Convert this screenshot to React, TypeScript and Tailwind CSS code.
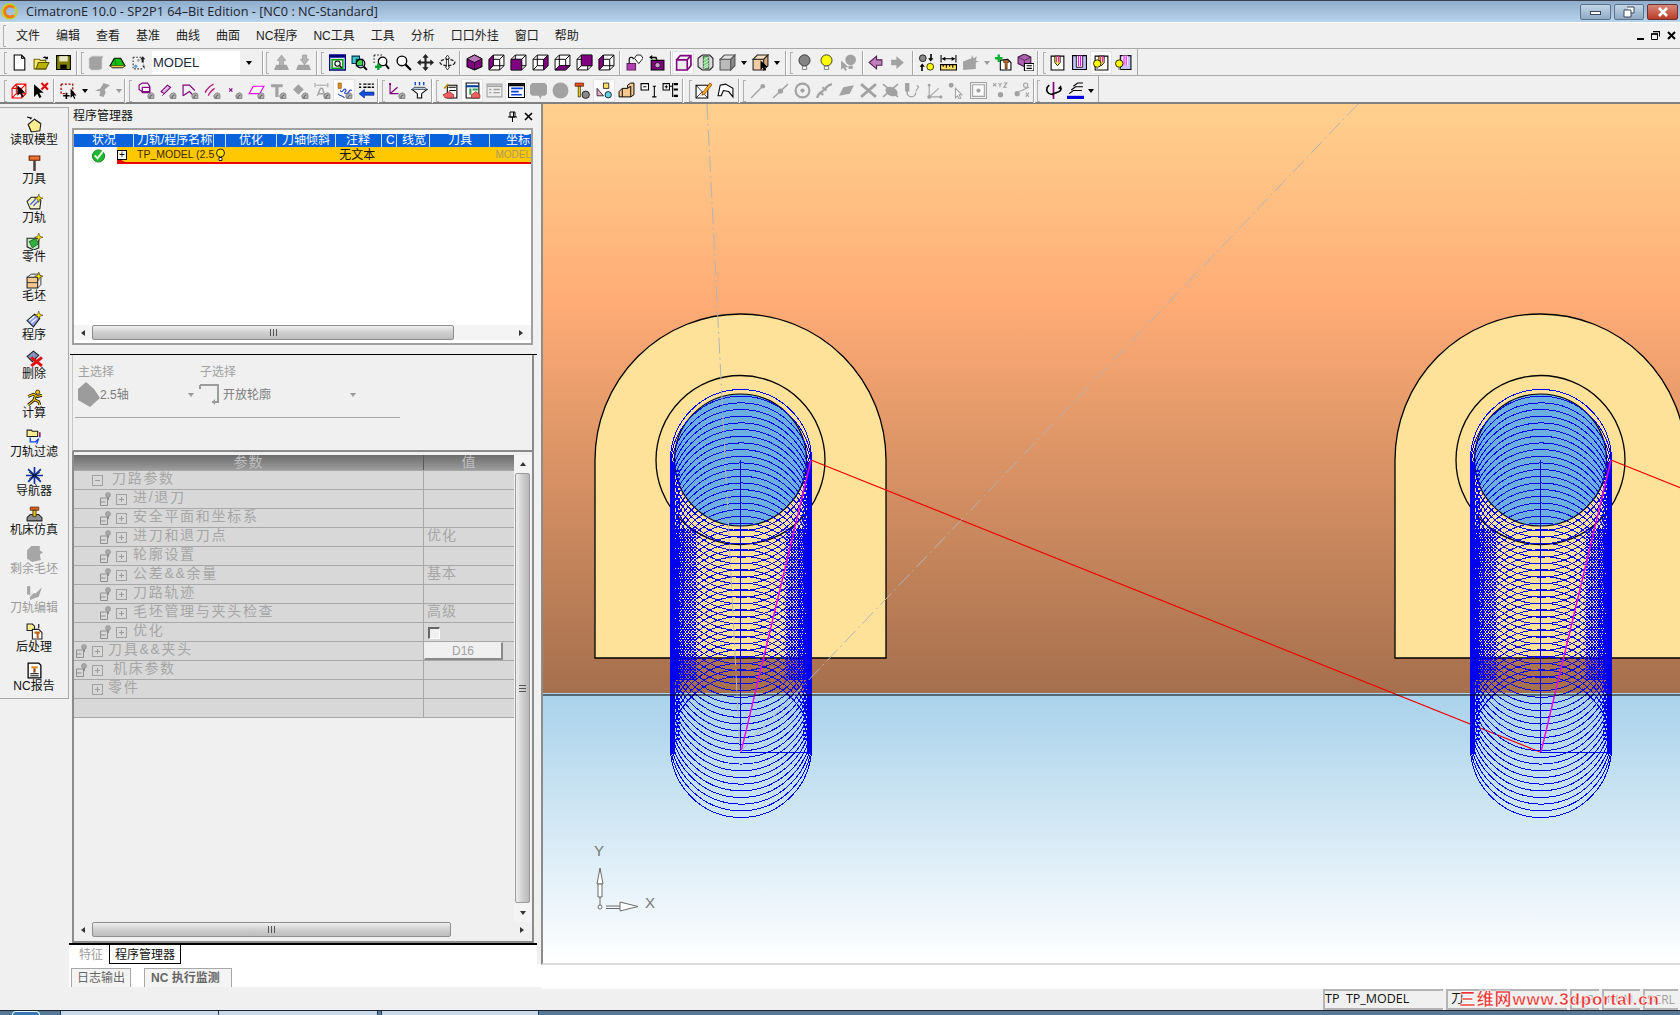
import type { ReactNode } from "react";

const P = "#800080";
const G = "#a2a2a2";

function S({ children, size = 17 }: { children: ReactNode; size?: number }) {
  return (
    <svg width={size} height={size} viewBox="0 0 16 16" className="shrink-0">
      {children}
    </svg>
  );
}

const badge = (
  <>
    <path d="M10 15.5a3.2 3.2 0 0 1 5-4v4z" fill="#b0b0b0" stroke="#666" strokeWidth=".6" />
    <path d="M11.5 15.5a2 2 0 0 1 2-3" fill="none" stroke="#333" strokeWidth=".7" />
  </>
);

const arrowCursor = <path d="M8 6l0 9 2.4-2.2 1.6 3 1.4-.8-1.6-2.8 3 0z" fill="#000" />;

function wire(face: string) {
  const faces: Record<string, string> = {
    front: "1,5 11,5 11,15 1,15",
    right: "11,5 15,1 15,11 11,15",
    back: "5,1 15,1 15,11 5,11",
    left: "1,5 5,1 5,11 1,15",
    bottom: "1,15 5,11 15,11 11,15",
  };
  return (
    <>
      <path d="M1 5h10v10H1zM1 5l4-4h10v10l-4 4M11 5l4-4M5 1v10h10M5 11l-4 4" fill="#fff" stroke="#000" strokeWidth=".9" />
      <polygon points={faces[face]} fill={P} stroke="#000" strokeWidth=".6" />
    </>
  );
}

function bulb(fill: string, base = "#777") {
  return (
    <>
      <circle cx="8" cy="6" r="5.2" fill={fill} stroke="#333" strokeWidth=".9" />
      <path d="M6 11.5h4v3H6z" fill="#fff" stroke={base} strokeWidth=".9" />
    </>
  );
}

function toolBlock(bg: string) {
  return (
    <>
      <path d="M2 2h12v13H2z" fill={bg} stroke="#000" />
      <path d="M5.500 2h5v6l-2.500 3-2.500-3z" fill="#ffff40" stroke="#000" strokeWidth=".8" />
      <path d="M7 2v6M9 2v6" stroke="#f0f" strokeWidth=".9" />
    </>
  );
}

const icons: Record<string, ReactNode> = {
  new: <path d="M3 1h7l3 3v11H3zM10 1v3h3" fill="#fff" stroke="#000" />,
  open: (
    <>
      <path d="M1 5h5l1 1h5v8H1z" fill="#ffe96b" stroke="#6c6800" />
      <path d="M3 14l2-6h10l-3 6z" fill="#bcb000" stroke="#5a5500" />
      <path d="M9 4c1-2 3-2 4-1l1-1v3h-3l1-1c-1-.5-2 0-3 0z" fill="#000" />
    </>
  ),
  save: (
    <>
      <path d="M1.500 1.500h13v13h-13z" fill="#808000" stroke="#000" />
      <path d="M4 2h8v5H4z" fill="#e8e8c8" />
      <path d="M5 10h6v4H5z" fill="#000" />
    </>
  ),
  g1: <path d="M2 4l3-2h10l-1 3v9l-3 1H4l-2-2z" fill={G} stroke="#c6c6c6" strokeWidth=".6" />,
  green: (
    <>
      <path d="M1 11l4-7h6l4 7z" fill="#12c010" stroke="#000" />
      <path d="M5 4l2 7M3 11h12" stroke="#0a6a08" strokeWidth=".8" />
      <path d="M1 11l2 2h10l2-2" fill="#e9cf52" stroke="#000" strokeWidth=".8" />
    </>
  ),
  dotted: (
    <>
      <path d="M2 3h8M2 3v11h9" fill="none" stroke="#333" strokeDasharray="1.500 1.500" />
      <path d="M11 2l2.500 3H12v3h-2V5H8.500zM13 14l-2.500-3H12V8" fill="#222" />
      <circle cx="4.500" cy="11.500" r="1.500" fill="#59c" />
      <circle cx="7" cy="6" r="1.200" fill="#999" />
    </>
  ),
  up: (
    <>
      <path d="M1 15l2-5h10l2 5z" fill={G} />
      <path d="M8 1l4 5h-2v5H6V6H4z" fill="#b4b4b4" stroke="#8c8c8c" strokeWidth=".5" />
    </>
  ),
  down: (
    <>
      <path d="M1 15l2-5h10l2 5z" fill={G} />
      <path d="M9 10L5 5h2V1h4v4h2z" fill="#b4b4b4" stroke="#8c8c8c" strokeWidth=".5" />
    </>
  ),
  fit: (
    <>
      <path d="M.5 1h15v14H.5z" fill="#d8e8e8" stroke="#000080" strokeWidth="1.400" />
      <path d="M1 1h14v2.500H1z" fill="#000080" />
      <path d="M3 5.500h10v8H3z" fill="#fff" stroke="#00a000" strokeWidth="1.400" />
      <circle cx="8" cy="9" r="2.500" fill="none" stroke="#000" />
      <path d="M10 11l2 2" stroke="#000" strokeWidth="1.400" />
    </>
  ),
  zoomA: (
    <>
      <path d="M1 2h7v7H1z" fill="#40c8c8" stroke="#003050" />
      <path d="M5 5h6v6H5z" fill="#40d040" stroke="#003050" />
      <circle cx="9" cy="9" r="4" fill="none" stroke="#000" strokeWidth="1.200" />
      <path d="M12 12l3 3" stroke="#000" strokeWidth="1.800" />
    </>
  ),
  zoomB: (
    <>
      <path d="M1 1h8M1 1v8" stroke="#222" strokeDasharray="1.500 1.500" />
      <circle cx="9" cy="7" r="4" fill="#fff" stroke="#000" strokeWidth="1.200" />
      <path d="M12 10l3 4" stroke="#000" strokeWidth="1.800" />
      <path d="M2 12h6M5 9v6" stroke="#00a030" strokeWidth="2.200" />
    </>
  ),
  mag: (
    <>
      <circle cx="6.500" cy="6.500" r="4.500" fill="#fff" stroke="#000" strokeWidth="1.300" />
      <path d="M10 10l5 5" stroke="#000" strokeWidth="2" />
    </>
  ),
  pan: <path d="M8 0l3 3.500H9V7h3.500V5L16 8l-3.500 3V9H9v3.500h2L8 16l-3-3.500h2V9H3.500v2L0 8l3.500-3v2H7V3.500H5z" fill="#222" />,
  orbit: (
    <>
      <path d="M8 1l2 3H9v8h1l-2 3-2-3h1V4H6z" fill="#fff" stroke="#222" strokeWidth=".8" />
      <ellipse cx="8" cy="8" rx="7" ry="3" fill="none" stroke="#222" strokeWidth="1.200" strokeDasharray="3 1.500" />
    </>
  ),
  solid: (
    <>
      <path d="M8 1l7 3.500v7.500L8 15l-7-3V4.500z" fill={P} stroke="#000" />
      <path d="M1 4.500L8 8l7-3.500L8 1z" fill="#b877b8" stroke="#000" strokeWidth=".7" />
      <path d="M8 8v7" stroke="#000" strokeWidth=".7" />
    </>
  ),
  w1: wire("left"),
  w2: wire("front"),
  w3: wire("right"),
  w4: wire("bottom"),
  w5: wire("back"),
  w6: wire("left"),
  lock: (
    <>
      <path d="M1 9h8v6H1z" fill="#b040b0" stroke="#602060" />
      <path d="M3 9V5a2 2 0 0 1 4 0" fill="none" stroke="#000" />
      <path d="M10 1h4l2 3-4 5-4-5z" fill="#fff" stroke="#000" strokeWidth=".8" />
    </>
  ),
  cam: (
    <>
      <path d="M3 6h12v9H3z" fill={P} stroke="#000" />
      <circle cx="9" cy="10.500" r="2.500" fill="#d0a0d0" stroke="#000" strokeWidth=".7" />
      <path d="M1 3l3-2v1.500h4l1 3H7.500L7 4H4v1.500z" fill="#000" />
    </>
  ),
  box: <path d="M1.500 5.500h10v9.500h-10zM1.500 5.500L5 1.500h10v9.500L11.500 15M11.500 5.500L15 1.500" fill="#ececec" stroke={P} strokeWidth="1.500" />,
  hatch: (
    <>
      <path d="M1 4l4-3h7l3 3v8l-3 3H5l-4-3z" fill="#ddd" stroke="#222" />
      <path d="M6 2v12h5V2z" fill="#76d07a" stroke="#222" strokeWidth=".6" />
      <path d="M6 6l5-3M6 9l5-3M6 12l5-3M6 14l5-3" stroke="#fff" strokeWidth=".7" />
    </>
  ),
  gcube: (
    <>
      <path d="M1 5h10v10H1z" fill="#bbb" stroke="#555" />
      <path d="M1 5l4-4h10l-4 4z" fill="#e0e0e0" stroke="#555" />
      <path d="M11 5l4-4v10l-4 4z" fill="#888" stroke="#555" />
    </>
  ),
  tan: (
    <>
      <path d="M1 5h10v10H1z" fill="#f1ccA0" stroke="#222" />
      <path d="M1 5l4-4h10l-4 4z" fill="#f7e0c0" stroke="#222" />
      <path d="M11 5l4-4v10l-4 4z" fill="#d4a878" stroke="#222" />
      {arrowCursor}
    </>
  ),
  bulbG: bulb("#858585"),
  bulbY: bulb("#ffff00"),
  bulbC: (
    <>
      <circle cx="10" cy="5.500" r="5" fill={G} />
      <path d="M8 11h4v3H8z" fill={G} />
      <path d="M1 6v9l2-2 2 3 1.500-1-1.500-2.500h3z" fill={G} />
    </>
  ),
  back: <path d="M2 8l7-6v3.500h5v5H9V14z" fill="#c080c0" stroke="#502050" />,
  fwd: <path d="M14 8L7 2v3.500H2v5h5V14z" fill={G} />,
  swap: (
    <>
      <circle cx="4.500" cy="4" r="3.200" fill="#888" stroke="#000" strokeWidth=".7" />
      <circle cx="11.500" cy="12" r="3.200" fill="#ff0" stroke="#000" strokeWidth=".7" />
      <path d="M11.500 0v4h-2l2.500 3 2.500-3h-1.500V0zM4.500 16v-4h2L4 9l-2.500 3H3v4z" fill="#000" />
    </>
  ),
  measure: (
    <>
      <path d="M1 1v7M15 1v7M2 4.500h12" stroke="#000" />
      <path d="M2 4.500L5 2.500v4zM14 4.500L11 2.500v4z" fill="#000" />
      <path d="M.5 10h15v5H.5z" fill="#ffe060" stroke="#000" />
      <path d="M3 10v2M6 10v3M9 10v2M12 10v3" stroke="#000" />
    </>
  ),
  gstar: <path d="M1 7l8-3V1l2 3 3-2-1 4 3 1-3 1v6l-12 1z" fill={G} />,
  plusT: (
    <>
      <path d="M5 6l7-1 3 3v7H5z" fill="#fff" stroke="#000" />
      <path d="M8 6h5v2h-1.500v6h-2V8H8z" fill="#c06010" stroke="#000" strokeWidth=".4" />
      <path d="M0 4h7M3.500 .5v7" stroke="#00b030" strokeWidth="2.200" />
    </>
  ),
  cubeT: (
    <>
      <path d="M7 0l6 3v6l-6 3-6-3V3z" fill="#b060b0" stroke="#402040" />
      <path d="M7 15V6l-6-3M7 6l6-3" fill="none" stroke="#402040" strokeWidth=".7" />
      <path d="M7 9h9v7H7z" fill="#fff" stroke="#000" />
      <path d="M9 11h5M9 13.500h5" stroke="#000" />
    </>
  ),
  t1: toolBlock("#fff"),
  t2: (
    <>
      <path d="M1.500 1.500h13v13h-13z" fill="#c4c4ff" stroke="#000" />
      <path d="M5 1.500h6v11H5z" fill="#fff" stroke="#000" strokeWidth=".8" />
      <path d="M7 1.500v10M9 1.500v10" stroke="#f0f" />
    </>
  ),
  t3: (
    <>
      {toolBlock("#fff")}
      <circle cx="4" cy="9" r="3.500" fill="#ff0" stroke="#000" strokeWidth=".8" />
      <path d="M3 13h2v2H3z" fill="#999" />
    </>
  ),
  t4: (
    <>
      <path d="M5 1.500h10v13H5z" fill="#c4c4ff" stroke="#000" />
      <path d="M7 1.500h5v9H7z" fill="#fff" />
      <path d="M8.500 1.500v9M10.500 1.500v9" stroke="#f0f" />
      <circle cx="4" cy="9" r="3.500" fill="#ff0" stroke="#000" strokeWidth=".8" />
      <path d="M3 13h2v2H3z" fill="#999" />
    </>
  ),
  redCube: (
    <>
      <path d="M1 6h9v9H1zM1 6l4-4h9v9l-4 4M10 6l4-4M5 2v9h9M5 11l-4 4" fill="#fff" stroke="#f00" />
      <path d="M6 3v10l2.500-2.500 2 4 1.500-.8-2-3.700h3.500z" fill="#000" />
    </>
  ),
  cursorX: (
    <>
      <path d="M1 2v12l3-3 2 4 2-1-2-4h4z" fill="#000" />
      <path d="M8 1l6 6M14 1L8 7" stroke="#e00000" strokeWidth="2" />
    </>
  ),
  dashSel: (
    <>
      <path d="M1 2h11v8M1 2v9h6" fill="none" stroke="#a00000" strokeDasharray="2 1.500" strokeWidth="1.200" />
      <path d="M10 6v9l2-2 1.500 3 1-.6-1.500-2.800h2.500z" fill="#000" />
      <path d="M3 13h6M6 10v6" stroke="#000" strokeWidth="1.500" />
    </>
  ),
  gArrow: <path d="M1 8l5-2 3-5 6 2-5 4 1 3-2 4-4-1 1-4z" fill={G} />,
  tp1: (
    <>
      <path d="M1 3l3-2h5l2 3v5H4L1 7z" fill="#fff" stroke={P} strokeWidth="1.100" />
      <path d="M4 5h7v5H4z" fill="none" stroke={P} strokeWidth="1.100" />
      {badge}
    </>
  ),
  tp2: (
    <>
      <path d="M1 9l6-6 3 2-6 6z" fill="#e0c0e0" stroke={P} />
      <path d="M2 13l8-8" stroke={P} strokeWidth=".8" />
      {badge}
    </>
  ),
  tp3: (
    <>
      <path d="M1 13V3h6l5 5" fill="none" stroke={P} strokeWidth="1.100" />
      <path d="M1 13l6-4 3 3" fill="none" stroke={P} strokeWidth="1.100" />
      {badge}
    </>
  ),
  tp4: (
    <>
      <path d="M1 10c2-4 4-6 8-8M4 13c1-3 3-5 6-7" fill="none" stroke="#b02080" strokeWidth="1.200" />
      {badge}
    </>
  ),
  tp5: (
    <>
      <path d="M3 6l3 3M6 6L3 9" stroke={P} />
      {badge}
    </>
  ),
  tp6: (
    <>
      <path d="M1 11l4-7h10l-4 7z" fill="#fff" stroke="#f000f0" strokeWidth="1.100" />
      {badge}
    </>
  ),
  tp7: (
    <>
      <path d="M1 2h11v3H8v9H5V5H1z" fill={G} />
      {badge}
    </>
  ),
  tp8: (
    <>
      <path d="M1 7l5-5 5 5-5 5z" fill={G} />
      {badge}
    </>
  ),
  tp9: (
    <>
      <path d="M1 1v4M13 1v4M2 3h10" stroke={G} />
      <path d="M3 13l3-7h2l2 7M4 11h5" fill="none" stroke={G} strokeWidth="1.300" />
      {badge}
    </>
  ),
  zig: (
    <>
      <path d="M2 1h3v5H2z" fill="#e09020" stroke="#805000" strokeWidth=".6" />
      <path d="M4 8c2 4 3-3 5-1s-3 3 0 4 3-5 6-3M2 11c2 3 4 1 6 4" fill="none" stroke="#2040c0" />
      {badge}
    </>
  ),
  lines: (
    <>
      <path d="M1 2h2M5 2h10M1 5h2M5 5h10" stroke="#000" strokeWidth="1.300" strokeDasharray="3 1" />
      <path d="M1 11l5-4v2.500h9v3H6V15z" fill="#1050e0" stroke="#002080" strokeWidth=".6" />
    </>
  ),
  axisP: (
    <>
      <path d="M1 1v10h8M1 11l7-6" fill="none" stroke={P} strokeWidth="1.100" />
      <circle cx="1" cy="2" r="1" fill={P} />
      {badge}
    </>
  ),
  funnel: (
    <>
      <path d="M1 7h14l-5 4v4H6v-4z" fill="#fff" stroke="#000" />
      <path d="M1 7l2-2h10l2 2" fill="#bcd" stroke="#000" strokeWidth=".6" />
      <path d="M4 0v3M8 0v3M12 0v3" stroke="#1040d0" strokeWidth="1.300" />
    </>
  ),
  hand: (
    <>
      <path d="M5 3h9v12H5z" fill="#fff" stroke="#000" />
      <path d="M6 5h7M7 8h6" stroke="#000" />
      <path d="M2 6l4-4" stroke="#c09000" strokeWidth="1.500" />
      <path d="M1 12l6-3 4 3v3H3z" fill="#f06060" stroke="#802020" strokeWidth=".6" />
    </>
  ),
  tableR: (
    <>
      <path d="M2 1h12v14H2z" fill="#fff" stroke="#000" />
      <path d="M2 4h12" stroke="#00409a" strokeWidth="2" />
      <path d="M5 6h2v6H5zM8 6h5v2H8z" fill="#30a050" />
      <path d="M7 12l4-3 4 3v3H7z" fill="#f06060" stroke="#802020" strokeWidth=".6" />
    </>
  ),
  tableG: (
    <>
      <path d="M1 2h14v12H1z" fill="#eee" stroke={G} />
      <path d="M1 4h14" stroke={G} strokeWidth="1.500" />
      <path d="M3 7h2M3 10h2M7 7h6M7 10h6" stroke={G} strokeWidth="1.400" />
    </>
  ),
  tableB: (
    <>
      <path d="M.5 1.500h15v13H.5z" fill="#fff" stroke="#000" />
      <path d="M1 2h14v2H1z" fill="#000" />
      <path d="M3 6h11M3 9h7M3 12h10" stroke="#0040e0" strokeWidth="1.600" />
    </>
  ),
  bubble: <path d="M2 1h12l2 2v8l-2 2h-3l-1 3-2-3H2l-2-2V3z" fill={G} />,
  disc: <circle cx="8" cy="8" r="7.500" fill={G} />,
  toolBall: (
    <>
      <path d="M1 1h8v3H1z" fill="#e85020" stroke="#501000" strokeWidth=".6" />
      <path d="M4 4h2v10H4z" fill="#ffe000" stroke="#000" strokeWidth=".6" />
      <circle cx="11" cy="12" r="3.500" fill="#888" stroke="#000" strokeWidth=".7" />
    </>
  ),
  shapes: (
    <>
      <path d="M1 13V6l6 7z" fill="#f0a8c8" stroke="#000" strokeWidth=".7" />
      <path d="M7 1h5v5H7z" fill="#ffe060" stroke="#000" strokeWidth=".7" />
      <circle cx="11.500" cy="12" r="3" fill="#60d0e0" stroke="#000" strokeWidth=".7" />
    </>
  ),
  block: <path d="M1 14V9l3-3h5V3l3-2h3v11l-3 2zM9 6l3-2v10M4 6v8" fill="#f6c890" stroke="#000" strokeWidth=".9" />,
  minusT: (
    <>
      <path d="M1 1.500h7v6H1z" fill="#fff" stroke="#000" />
      <path d="M3 4.500h3M12 4h3M13.500 4v10M11.500 14h4" stroke="#000" />
    </>
  ),
  plusTree: (
    <>
      <path d="M1 1.500h6v6H1z" fill="#fff" stroke="#000" />
      <path d="M2.500 4.500h3M4 3v3M7 4h3M10 1v13" stroke="#000" />
      <path d="M11 1h4v2h-4zM11 6h4v2h-4zM11 12h4v2h-4z" fill="#000" />
    </>
  ),
  note: (
    <>
      <path d="M1 3h11v12H1z" fill="#fff" stroke="#000" />
      <path d="M1 3l11 12M1 15l6-6" stroke="#000" strokeWidth=".7" />
      <path d="M7 10l7-9 2 1.500-7 9-2.500 1z" fill="#f0b020" stroke="#802000" strokeWidth=".6" />
    </>
  ),
  wireS: <path d="M1 13L3 3l5-1 7 4 0 8-4-5-5-1-2 5z" fill="#fff" stroke="#000" />,
  l1: (
    <>
      <path d="M1 15L11 5" stroke={G} strokeWidth="1.300" />
      <circle cx="12" cy="4" r="2.200" fill={G} />
    </>
  ),
  l2: (
    <>
      <path d="M1 15L15 2" stroke={G} strokeWidth="1.300" />
      <circle cx="8" cy="8.500" r="2.500" fill={G} />
    </>
  ),
  l3: (
    <>
      <circle cx="8" cy="8" r="6.500" fill="none" stroke={G} strokeWidth="2" />
      <circle cx="8" cy="8" r="2" fill={G} />
    </>
  ),
  l4: <path d="M1 15c1-5 4-5 6-7s3-5 8-6M3 10l4 2M6 5l4 3" fill="none" stroke={G} strokeWidth="2" />,
  l5: <path d="M1 13l4-8 10-2-4 8z" fill={G} />,
  l6: <path d="M1 2l14 12M15 2L1 14" stroke={G} strokeWidth="2.500" />,
  l7: (
    <>
      <path d="M1 2l14 12M15 2L1 14" stroke={G} strokeWidth="1.500" />
      <ellipse cx="9" cy="9" rx="6" ry="4" fill={G} transform="rotate(25 9 9)" />
    </>
  ),
  l8: (
    <>
      <path d="M3 2v8a4 4 0 0 0 8 0" fill="none" stroke={G} strokeWidth="1.300" />
      <path d="M1 1h4v8H1z" fill={G} />
      <path d="M11 9l3-5M12 3l2 2" stroke={G} />
    </>
  ),
  l9: (
    <>
      <path d="M3 14V2M3 14h12M3 14l9-8" stroke={G} />
      <circle cx="3" cy="14" r="1.800" fill={G} />
      <circle cx="14" cy="14" r="1.500" fill={G} />
      <circle cx="3" cy="3" r="1.300" fill={G} />
    </>
  ),
  l10: (
    <>
      <circle cx="3" cy="3" r="2.300" fill={G} />
      <path d="M7 6v9l2-2 1.500 3 1.500-.7L10.500 12H13z" fill="#fff" stroke={G} />
    </>
  ),
  l11: (
    <>
      <path d="M.5.500h15v15H.5z" fill="none" stroke={G} />
      <path d="M2.500 2.500h11v11h-11z" fill="#fafafa" stroke={G} />
      <circle cx="8" cy="8" r="2" fill={G} />
    </>
  ),
  l12: (
    <>
      <path d="M1 1l3 3M4 1L1 4M6 1l1.500 2L9 1M7.500 3v2M11 1h3l-3 4h3" stroke={G} fill="none" />
      <circle cx="8" cy="12" r="2.500" fill={G} />
    </>
  ),
  l13: (
    <>
      <circle cx="11" cy="3" r="2" fill="none" stroke={G} />
      <circle cx="3" cy="11" r="2.500" fill={G} />
      <path d="M5 9l9-4M11 10l3 4M14 10l-3 4" stroke={G} />
    </>
  ),
  spin: (
    <>
      <path d="M8 0v16" stroke={P} strokeWidth="1.600" />
      <path d="M8 13h-1" stroke={P} />
      <path d="M4 3C-1 7 3 13 8 11s7-2 7-5" fill="none" stroke="#000" strokeWidth="1.500" />
      <path d="M15 3l1 4-4-1z" fill="#000" />
    </>
  ),
  layers: (
    <>
      <path d="M2 11l4-3h8M4 7.500l4-3h7M6 4l4-3h5" fill="none" stroke="#000" />
      <path d="M0 13h16v3H0z" fill="#0000e0" />
    </>
  ),
};

function Btn({ name, hi, className = "" }: { name: string; hi?: boolean; className?: string }) {
  return (
    <div
      className={`flex h-[23px] w-[22px] shrink-0 items-center justify-center ${
        hi ? "border border-[#e4e4e4] bg-[#fbfbfb]" : ""
      } ${className}`}
    >
      <S>{icons[name]}</S>
    </div>
  );
}

function Btns({ names, hi = [], first = "" }: { names: string[]; hi?: string[]; first?: string }) {
  return (
    <>
      {names.map((n, i) => (
        <Btn key={n + i} name={n} hi={hi.includes(n)} className={i === 0 ? first : ""} />
      ))}
    </>
  );
}

function Drop({ className = "", gray }: { className?: string; gray?: boolean }) {
  return (
    <div className={`flex shrink-0 items-center justify-center ${className}`}>
      <span
        className={`h-0 w-0 border-x-[3.5px] border-t-[4px] border-x-transparent ${
          gray ? "border-t-[#9a9a9a]" : "border-t-black"
        }`}
      />
    </div>
  );
}

function Sep({ className = "" }: { className?: string }) {
  return <div className={`h-[24px] w-[2px] shrink-0 border-l border-r border-l-[#a6a6a6] border-r-white ${className}`} />;
}

function Grip({ className = "" }: { className?: string }) {
  return <div className={`h-[22px] w-[3px] shrink-0 border-y border-l border-[#b0b0b0] ${className}`} />;
}

function TitleBar() {
  return (
    <div className="flex h-[22px] shrink-0 items-center border-t border-[#3c4149] bg-[linear-gradient(180deg,#8fadcc,#b9d3ec)] pr-[2px]">
      <svg width="17" height="17" viewBox="0 0 16 16" className="ml-[1px] shrink-0">
        <circle cx="8" cy="8" r="6.500" fill="none" stroke="#c4d028" strokeWidth="2.500" />
        <path d="M12 4.500a5 5 0 1 0 0 7" fill="none" stroke="#f07818" strokeWidth="2.600" />
      </svg>
      <span className="ml-[8px] text-[12.7px] text-[#20242c] [font-family:'Open_Sans','Noto_Sans_CJK_SC',sans-serif]">
        CimatronE 10.0 - SP2P1 64–Bit Edition - [NC0 : NC-Standard]
      </span>
      <div className="ml-auto flex gap-[3px]">
        <div className="flex h-[16px] w-[31px] items-center justify-center rounded-[2px] border border-[#5d738c] bg-[linear-gradient(180deg,#c3d6e8,#8fa9c4)]">
          <span className="mt-[3px] h-[4px] w-[11px] border border-[#38465a] bg-white" />
        </div>
        <div className="flex h-[16px] w-[30px] items-center justify-center rounded-[2px] border border-[#5d738c] bg-[linear-gradient(180deg,#c3d6e8,#8fa9c4)]">
          <svg width="12" height="12" viewBox="0 0 12 12">
            <path d="M4 1h7v6H8M1 4h7v7H1z" fill="#fff" stroke="#38465a" />
          </svg>
        </div>
        <div className="flex h-[16px] w-[31px] items-center justify-center rounded-[2px] border border-[#6b3030] bg-[linear-gradient(180deg,#d88878,#b83c28)]">
          <svg width="12" height="10" viewBox="0 0 12 10">
            <path d="M2 1l8 8M10 1L2 9" stroke="#fff" strokeWidth="2.600" />
          </svg>
        </div>
      </div>
    </div>
  );
}

const menus = ["文件", "编辑", "查看", "基准", "曲线", "曲面", "NC程序", "NC工具", "工具", "分析", "口口外挂", "窗口", "帮助"];

function MenuBar() {
  return (
    <div className="flex h-[27px] shrink-0 items-center border-t border-b border-t-white border-b-[#a8a8a8] text-[12px] text-[#222]">
      <Grip className="ml-[3px] mr-[2px]" />
      {menus.map((m) => (
        <span key={m} className="px-[8px]">
          {m}
        </span>
      ))}
      <div className="ml-auto mr-[4px] flex items-center gap-[7px]">
        <span className="mt-[6px] h-[2px] w-[7px] bg-black" />
        <svg width="9" height="9" viewBox="0 0 9 9">
          <path d="M2.500.500h6v5M.500 3h6v5.500h-6z" fill="none" stroke="#000" />
          <path d="M2 .5h7M0 3h7" stroke="#000" strokeWidth="1.400" />
        </svg>
        <svg width="9" height="9" viewBox="0 0 9 9">
          <path d="M1 1l7 7M8 1L1 8" stroke="#000" strokeWidth="2" />
        </svg>
      </div>
    </div>
  );
}

function ToolRowOne() {
  return (
    <div className="flex h-[27px] shrink-0 border-b border-[#a8a8a8]">
      <div className="flex w-[1138px] items-center border-r border-[#a8a8a8] pt-[1px]">
        <Grip className="ml-[4px] mr-[1px]" />
        <Btns names={["new", "open", "save"]} />
        <Sep className="ml-[2px]" />
        <Grip className="ml-[3px]" />
        <Btns names={["g1", "green", "dotted"]} />
        <div className="ml-[2px] flex h-[23px] w-[105px] shrink-0 items-center justify-between bg-white pl-[1px] text-[13px] text-[#1a2a3a] [font-family:'Liberation_Sans',sans-serif]">
          MODEL
          <span className="flex h-full w-[17px] items-center justify-center bg-[#f0f0f0]">
            <span className="h-0 w-0 border-x-[3.5px] border-t-[4px] border-x-transparent border-t-black" />
          </span>
        </div>
        <Sep className="ml-[5px]" />
        <Grip className="ml-[2px] mr-[1px]" />
        <Btns names={["up", "down"]} />
        <Sep className="ml-[2px]" />
        <Grip className="ml-[3px] mr-[2px]" />
        <Btns names={["fit", "zoomA", "zoomB", "mag", "pan", "orbit"]} />
        <Sep className="ml-[1px]" />
        <Btns first="ml-[2px]" names={["solid", "w1", "w2", "w3", "w4", "w5", "w6"]} />
        <Sep className="ml-[2px]" />
        <Btns first="ml-[2px]" names={["lock", "cam"]} />
        <Sep className="ml-[3px]" />
        <Btns hi={["box"]} names={["box", "hatch", "gcube"]} />
        <Drop className="w-[11px]" />
        <Btn name="tan" />
        <Drop className="w-[12px]" />
        <Sep className="ml-[2px]" />
        <Grip className="ml-[3px]" />
        <Btns names={["bulbG", "bulbY", "bulbC"]} />
        <Sep className="ml-[3px]" />
        <Btns names={["back", "fwd"]} />
        <Sep className="ml-[4px]" />
        <Btns first="ml-[1px]" names={["swap", "measure", "gstar"]} />
        <Drop gray className="w-[11px]" />
        <Btns names={["plusT", "cubeT"]} />
        <Sep className="ml-[1px]" />
        <Grip className="ml-[4px]" />
        <Btns hi={["t3"]} names={["t1", "t2", "t3", "t4"]} />
      </div>
    </div>
  );
}

function ToolRowTwo() {
  return (
    <div className="flex h-[28px] shrink-0 border-b-2 border-[#808080]">
      <div className="flex w-[1099px] items-center border-r border-[#a8a8a8] pt-[3px]">
        <Grip className="ml-[4px] mr-[1px]" />
        <Btns names={["redCube", "cursorX"]} />
        <Sep className="ml-[1px]" />
        <Btn name="dashSel" className="ml-[2px]" />
        <Drop className="w-[12px]" />
        <Btn name="gArrow" />
        <Drop gray className="w-[11px]" />
        <Sep />
        <Grip className="ml-[3px] mr-[3px]" />
        <Btns hi={["zig"]} names={["tp1", "tp2", "tp3", "tp4", "tp5", "tp6", "tp7", "tp8", "tp9", "zig", "lines"]} />
        <Sep />
        <Grip className="ml-[3px] mr-[1px]" />
        <Btns names={["axisP", "funnel"]} />
        <Sep className="ml-[1px]" />
        <Grip className="ml-[3px]" />
        <Btns
          hi={["tableR", "tableB", "shapes"]}
          names={["hand", "tableR", "tableG", "tableB", "bubble", "disc", "toolBall", "shapes", "block", "minusT", "plusTree"]}
        />
        <Sep className="ml-[1px]" />
        <Grip className="ml-[5px]" />
        <Btns names={["note", "wireS"]} />
        <Sep className="ml-[2px]" />
        <Grip className="ml-[3px] mr-[1px]" />
        <Btns names={["l1", "l2", "l3", "l4", "l5", "l6", "l7", "l8", "l9", "l10", "l11", "l12", "l13"]} />
        <Sep />
        <Grip className="ml-[2px] mr-[2px]" />
        <Btns names={["spin", "layers"]} />
        <Drop className="w-[10px]" />
      </div>
    </div>
  );
}

const sideIcons: Record<string, ReactNode> = {
  read: (
    <>
      <path d="M2 8l6-5 6 4-1 7-8 1z" fill="#ffee90" stroke="#222" />
      <path d="M2 8l3 7M8 3l5 4" stroke="#222" strokeWidth=".7" />
      <path d="M1 1l4 1-1 1" fill="none" stroke="#000" />
    </>
  ),
  tool: (
    <>
      <path d="M3 1h10v4H3z" fill="#f07030" stroke="#602000" />
      <path d="M6.800 5h2.400v10H6.800z" fill="#504040" />
    </>
  ),
  path: (
    <>
      <path d="M1 7l4-4h6l3 3-1 8H4z" fill="#f4f0c0" stroke="#222" />
      <path d="M4 10l5-5M7 11l5-5" stroke="#4060d0" strokeWidth="1.300" />
      <path d="M12 0l1 3 3 1-3 1-1 3-1-3-3-1 3-1z" fill="#ffe000" stroke="#000" strokeWidth=".4" />
    </>
  ),
  part: (
    <>
      <path d="M1 5h11v9l-5 2-6-3z" fill="#c8e8c8" stroke="#222" />
      <path d="M3 8l6-3 3 5-6 4z" fill="#30b040" stroke="#0a4010" strokeWidth=".6" />
      <path d="M12 0l1 3 3 1-3 1-1 3-1-3-3-1 3-1z" fill="#ffe000" stroke="#000" strokeWidth=".4" />
    </>
  ),
  stock: (
    <>
      <path d="M1 5h10v10H1z" fill="#f6c890" stroke="#222" />
      <path d="M1 5l4-3h8l-2 3M11 5l3-2v9l-3 3M11 10H1" fill="none" stroke="#222" strokeWidth=".8" />
      <path d="M12 0l1 3 3 1-3 1-1 3-1-3-3-1 3-1z" fill="#ffe000" stroke="#000" strokeWidth=".4" />
    </>
  ),
  prog: (
    <>
      <path d="M1 9l7-6 5 4-6 8z" fill="#8aa0f0" stroke="#222" />
      <path d="M3 9l5-4M5 11l5-4" stroke="#fff" strokeWidth="1.100" />
      <path d="M12 0l1 3 3 1-3 1-1 3-1-3-3-1 3-1z" fill="#ffe000" stroke="#000" strokeWidth=".4" />
    </>
  ),
  del: (
    <>
      <path d="M1 6l6-5 5 4-6 6z" fill="#8090c0" stroke="#222" />
      <path d="M5 7l10 8M15 7L5 15" stroke="#e01010" strokeWidth="2.800" />
    </>
  ),
  calc: (
    <>
      <circle cx="11" cy="3" r="2" fill="#f0c000" stroke="#000" strokeWidth=".6" />
      <path d="M2 7l5-2 4 2 4-1M9 6l-2 5-5 4M8 10l4 2 1 3" fill="none" stroke="#000" strokeWidth="2.600" />
      <path d="M2 7l5-2 4 2 4-1M9 6l-2 5-5 4M8 10l4 2 1 3" fill="none" stroke="#f0c000" strokeWidth="1.200" />
    </>
  ),
  filter: (
    <>
      <path d="M1 2h4l1 1h5v5H1z" fill="#ffee90" stroke="#222" />
      <path d="M13 4v5M4 9v4h5l3-3-2 5" fill="none" stroke="#1040e0" strokeWidth="1.200" />
      <path d="M13 4v4" stroke="#e01010" />
    </>
  ),
  nav: (
    <>
      <path d="M2 2l12 12M14 2L2 14M8 0v16M0 8h16" stroke="#1030a0" strokeWidth="1.600" />
      <path d="M3 5l10 6M13 5L3 11" stroke="#000" strokeWidth=".8" />
    </>
  ),
  sim: (
    <>
      <path d="M1 11l3-3h8l3 3v3H1z" fill="#909090" stroke="#222" />
      <path d="M4 1h8v3H4z" fill="#e06020" stroke="#502000" strokeWidth=".7" />
      <path d="M6.500 4h3v6h-3z" fill="#f0c000" stroke="#222" strokeWidth=".7" />
    </>
  ),
  rest: <path d="M1 5l4-4h8v4l3 2-3 2 1 5-8 2-5-3z" fill="#a6a6a6" />,
  edit: (
    <>
      <path d="M1 2h3v8H1z" fill="#a6a6a6" />
      <path d="M3 11l3-3 3 1 6-6-3 9-6 2-2 1z" fill="#a6a6a6" />
      <path d="M2 13l7-7" stroke="#fff" />
    </>
  ),
  post: (
    <>
      <path d="M1 1h5l2 2v4H1z" fill="#ffee90" stroke="#222" />
      <path d="M6 6h6l3 3v6H6z" fill="#fff" stroke="#222" />
      <path d="M8 8h5v2H8zM10 10h2v4h-2z" fill="#c06010" />
      <path d="M12 1v4" stroke="#000" />
    </>
  ),
  report: (
    <>
      <path d="M2 1h10l2 2v12H2z" fill="#fff" stroke="#000" strokeWidth="1.200" />
      <path d="M5 4h6v2H5z" fill="#e09020" />
      <path d="M7 6h2v4H7z" fill="#904010" />
      <path d="M4 11h8M4 13h8" stroke="#000" strokeWidth=".9" />
    </>
  ),
};

const sideItems: [string, string, boolean?][] = [
  ["read", "读取模型"],
  ["tool", "刀具"],
  ["path", "刀轨"],
  ["part", "零件"],
  ["stock", "毛坯"],
  ["prog", "程序"],
  ["del", "删除"],
  ["calc", "计算"],
  ["filter", "刀轨过滤"],
  ["nav", "导航器"],
  ["sim", "机床仿真"],
  ["rest", "剩余毛坯", true],
  ["edit", "刀轨编辑", true],
  ["post", "后处理"],
  ["report", "NC报告"],
];

function Sidebar() {
  return (
    <div className="w-[69px] shrink-0">
      <div className="mt-[3px] h-[592px] w-[69px] border-t border-r border-b border-[#a8a8a8] pt-[4px]">
        {sideItems.map(([icon, label, disabled]) => (
          <div key={label} className="flex h-[39px] flex-col items-center">
            <div className="mt-[4px] h-[17px]">
              <S>{sideIcons[icon]}</S>
            </div>
            <span className={`text-[12px] leading-[14px] ${disabled ? "text-[#9c9c9c]" : "text-[#111]"}`}>{label}</span>
          </div>
        ))}
      </div>
    </div>
  );
}

const columns: [string, string][] = [
  ["状况", "w-[60px] pl-[18px]"],
  ["刀轨/程序名称", "w-[80px] pl-[3px]"],
  ["", "w-[12px]"],
  ["优化", "w-[51px] pl-[13px]"],
  ["刀轴倾斜", "w-[59px] pl-[5px]"],
  ["注释", "w-[46px] pl-[10px]"],
  ["C", "w-[15px] pl-[4px]"],
  ["线宽", "w-[33px] pl-[5px]"],
  ["刀具", "w-[60px] pl-[18px]"],
  ["坐标", "w-[42px] pl-[16px]"],
];

function ScrollArrow({ dir }: { dir: "l" | "r" | "u" | "d" }) {
  const cls = {
    l: "border-y-[3.5px] border-r-[4px] border-y-transparent border-r-[#333]",
    r: "border-y-[3.5px] border-l-[4px] border-y-transparent border-l-[#333]",
    u: "border-x-[3.5px] border-b-[4px] border-x-transparent border-b-[#333]",
    d: "border-x-[3.5px] border-t-[4px] border-x-transparent border-t-[#333]",
  }[dir];
  return <span className={`h-0 w-0 ${cls}`} />;
}

function HScroll({ thumb }: { thumb: string }) {
  return (
    <div className="flex h-[15px] shrink-0 items-center">
      <div className="flex w-[18px] justify-center">
        <ScrollArrow dir="l" />
      </div>
      <div className={`relative flex h-full items-center justify-center rounded-[2px] border border-[#8e8e8e] bg-[linear-gradient(180deg,#f0f0f0,#cfcfcf_50%,#bdbdbd)] ${thumb}`}>
        <span className="h-[7px] w-[7px] border-x border-[#555] [background:linear-gradient(90deg,transparent_40%,#555_40%,#555_60%,transparent_60%)]" />
      </div>
      <div className="ml-auto mr-[4px] flex w-[12px] justify-center">
        <ScrollArrow dir="r" />
      </div>
    </div>
  );
}

function ProgramList() {
  return (
    <div className="flex h-[217px] flex-col border-2 border-[#a0a0a0] bg-white">
      <div className="relative flex-1 pt-[4px]">
        <div className="flex h-[13px] bg-[#0a62dc] text-[12px] leading-[13px] text-white">
          {columns.map(([label, cls], i) => (
            <div key={i} className={`shrink-0 overflow-hidden border-r border-[#cfe0ff] whitespace-nowrap last:border-r-0 ${cls}`}>
              {label}
            </div>
          ))}
        </div>
        <div className="relative flex h-[17px] items-center">
          <svg width="15" height="15" viewBox="0 0 16 16" className="absolute left-[17px] top-[1px]">
            <circle cx="8" cy="8.500" r="6.500" fill="#22b830" stroke="#128020" />
            <path d="M4 8l3 3 6-8" fill="none" stroke="#e8ffe8" strokeWidth="2" />
          </svg>
          <div className="relative ml-[43px] flex h-full flex-1 items-center border-b-2 border-[#f00000] bg-[#ffc800]">
            <span className="absolute bottom-0 left-0 h-0 w-0 border-b-[4px] border-r-[8px] border-b-[#f00000] border-r-transparent" />
            <span className="relative flex h-[10px] w-[10px] items-center justify-center border border-black bg-white text-[10px] leading-none">
              +
            </span>
            <span className="ml-[10px] text-[10.5px] text-[#3a2a00] [font-family:'Liberation_Sans',sans-serif]">TP_MODEL (2.5</span>
            <svg width="11" height="14" viewBox="0 0 11 14" className="ml-[1px]">
              <circle cx="5.500" cy="5" r="4" fill="#ffe000" stroke="#302000" />
              <path d="M4 9.500h3v3H4z" fill="#fff" stroke="#302000" />
            </svg>
            <span className="ml-[113px] text-[12px] text-[#111]">无文本</span>
            <span className="ml-auto text-[10px] text-[#a89868] [font-family:'Liberation_Sans',sans-serif]">MODEL</span>
          </div>
        </div>
      </div>
      <div className="mb-[3px] bg-[#f4f4f4]">
        <HScroll thumb="w-[362px]" />
      </div>
    </div>
  );
}

function SelectPanel() {
  return (
    <div className="relative h-[97px] border-r-2 border-b-2 border-l border-[#8a8a8a] border-l-[#c8c8c8] pl-[5px] pt-[8px] text-[12px] text-[#a2a2a2]">
      <div className="flex">
        <span className="w-[122px]">主选择</span>
        <span>子选择</span>
      </div>
      <div className="mt-[1px] flex h-[25px] w-[320px] items-center text-[#7c7c7c]">
        <svg width="22" height="25" viewBox="0 0 22 25" className="shrink-0">
          <path d="M0 7l8-7 8 7 6 9-10 9L0 18z" fill="#9c9c9c" />
        </svg>
        <span className="w-[87px]">2.5轴</span>
        <Drop gray className="w-[8px]" />
        <svg width="22" height="25" viewBox="0 0 22 25" className="ml-[4px] shrink-0">
          <path d="M1 3h18v17h-6M1 3v4" fill="none" stroke="#9c9c9c" strokeWidth="2" />
          <path d="M13 20l3-3v6z" fill="#9c9c9c" />
        </svg>
        <span className="ml-[2px] w-[126px]">开放轮廓</span>
        <Drop gray className="w-[8px]" />
      </div>
      <div className="ml-[-3px] mt-[10px] h-px w-[325px] bg-[#a8a8a8]" />
    </div>
  );
}

const rows: { text: string; value?: string; kind: "root" | "sub" | "top" | "plain"; pad?: boolean; check?: boolean; button?: string }[] = [
  { text: "刀路参数", kind: "root" },
  { text: "进/退刀", kind: "sub" },
  { text: "安全平面和坐标系", kind: "sub" },
  { text: "进刀和退刀点", value: "优化", kind: "sub" },
  { text: "轮廓设置", kind: "sub" },
  { text: "公差&&余量", value: "基本", kind: "sub" },
  { text: "刀路轨迹", kind: "sub" },
  { text: "毛坯管理与夹头检查", value: "高级", kind: "sub" },
  { text: "优化", kind: "sub", check: true },
  { text: "刀具&&夹头", kind: "top", button: "D16" },
  { text: "机床参数", kind: "top", pad: true },
  { text: "零件", kind: "plain" },
];

function TreeBox({ minus }: { minus?: boolean }) {
  return (
    <span className="relative h-[11px] w-[11px] shrink-0 border border-[#a0a0a0]">
      <span className="absolute left-[2px] top-[4px] h-px w-[5px] bg-[#9a9a9a]" />
      {minus ? null : <span className="absolute left-[4px] top-[2px] h-[5px] w-px bg-[#9a9a9a]" />}
    </span>
  );
}

function NodeIcon() {
  return (
    <svg width="12" height="14" viewBox="0 0 12 14" className="shrink-0">
      <path d="M.5 6h7v7.500h-7zM.5 10h5" fill="none" stroke="#8e8e8e" />
      <circle cx="8" cy="3" r="2.500" fill="#a8a8a8" stroke="#8e8e8e" strokeWidth=".6" />
      <path d="M7 5h2v3H7z" fill="#8e8e8e" />
    </svg>
  );
}

function ParamTable() {
  return (
    <div className="flex w-[440px] shrink-0 flex-col">
      <div className="flex h-[16px] shrink-0 border-b border-[#a8a8a8] bg-[linear-gradient(180deg,#6c6c6c,#9c9c9c)] text-[14px] leading-[15px] tracking-[1px] text-[#bdbdbd]">
        <div className="w-[350px] border-r border-[#5a5a5a] text-center">参数</div>
        <div className="w-[90px] text-center">值</div>
      </div>
      {[...rows, null].map((r, i) => (
        <div key={i} className="flex h-[19px] shrink-0 border-b border-[#a8a8a8] bg-[#d8d8d8] text-[14px] tracking-[1.7px] text-[#a6a6a6]">
          <div className="flex w-[350px] items-center border-r border-[#a8a8a8]">
            {r && r.kind === "root" ? (
              <>
                <span className="ml-[18px] flex">
                  <TreeBox minus />
                </span>
                <span className="ml-[9px] pb-[4px] leading-[14px]">{r.text}</span>
              </>
            ) : null}
            {r && r.kind === "sub" ? (
              <>
                <span className="ml-[26px]">
                  <NodeIcon />
                </span>
                <span className="ml-[4px] flex">
                  <TreeBox />
                </span>
                <span className="ml-[6px] pb-[4px] leading-[14px]">{r.text}</span>
              </>
            ) : null}
            {r && r.kind === "top" ? (
              <>
                <span className="ml-[2px]">
                  <NodeIcon />
                </span>
                <span className="ml-[4px] flex">
                  <TreeBox />
                </span>
                <span className={`pb-[4px] leading-[14px] ${r.pad ? "ml-[10px]" : "ml-[5px]"}`}>{r.text}</span>
              </>
            ) : null}
            {r && r.kind === "plain" ? (
              <>
                <span className="ml-[18px] flex">
                  <TreeBox />
                </span>
                <span className="ml-[5px] pb-[4px] leading-[14px]">{r.text}</span>
              </>
            ) : null}
          </div>
          <div className="flex flex-1 items-center text-[14px] tracking-[1px]">
            {r?.value ? <span className="ml-[3px] pb-[4px] leading-[14px]">{r.value}</span> : null}
            {r?.check ? (
              <span className="ml-[4px] mt-[2px] h-[12px] w-[12px] border-t-2 border-l-2 border-r border-b border-t-[#666] border-l-[#666] border-r-white border-b-white bg-[#f0f0f0]" />
            ) : null}
            {r?.button ? (
              <span className="flex h-[18px] w-[79px] items-center justify-center border border-r-2 border-b-2 border-[#8a8a8a] border-t-[#eee] border-l-[#eee] bg-[#f0f0f0] text-[12px] tracking-normal text-[#a0a0a0] [font-family:'Liberation_Sans',sans-serif]">
                {r.button}
              </span>
            ) : null}
          </div>
        </div>
      ))}
    </div>
  );
}

function VScroll() {
  return (
    <div className="flex w-[17px] shrink-0 flex-col items-center bg-[#f4f4f4]">
      <div className="flex h-[18px] items-center">
        <ScrollArrow dir="u" />
      </div>
      <div className="flex h-[430px] w-[15px] items-center justify-center rounded-[2px] border border-[#9a9a9a] bg-[linear-gradient(90deg,#f0f0f0,#cfcfcf_50%,#b8b8b8)]">
        <span className="h-[7px] w-[7px] [background:linear-gradient(180deg,#555_1px,transparent_1px,transparent_3px,#555_3px,#555_4px,transparent_4px,transparent_6px,#555_6px)]" />
      </div>
      <div className="flex h-[19px] items-center">
        <ScrollArrow dir="d" />
      </div>
    </div>
  );
}

function LeftPanel() {
  return (
    <div className="w-[472px] shrink-0">
      <div className="mt-[2px] ml-[1px] w-[467px]">
        <div className="flex h-[22px] items-center pb-[2px] pl-[3px] pr-[4px] text-[12px] text-[#111]">
          程序管理器
          <svg width="9" height="11" viewBox="0 0 9 11" className="ml-auto">
            <path d="M2 1h5v5H2zM0 6h9M4.500 6v5M5.500 1v5" fill="none" stroke="#000" />
          </svg>
          <svg width="9" height="9" viewBox="0 0 9 9" className="ml-[7px]">
            <path d="M1 1l7 7M8 1L1 8" stroke="#000" strokeWidth="1.600" />
          </svg>
        </div>
        <div className="ml-[2px] mr-[4px]">
          <ProgramList />
        </div>
        <div className="h-[10px] border-b border-black" />
        <div className="ml-[2px] mr-[3px]">
          <SelectPanel />
          <div className="flex h-[491px] flex-col border-b-2 border-l-2 border-r-2 border-[#8c8c8c]">
            <div className="flex h-[470px] shrink-0 pt-[3px]">
              <ParamTable />
              <VScroll />
            </div>
            <HScroll thumb="w-[359px]" />
          </div>
        </div>
      </div>
      <div className="h-[44px] text-[12px]">
        <div className="h-[21px] w-[468px] border-t-2 border-black bg-white">
          <div className="flex h-[19px]">
            <span className="ml-[10px] w-[30px] pt-[1px] text-[#a0a0a0]">特征</span>
            <span className="border-x border-b border-black px-[5px] pt-[1px] text-[#111]">程序管理器</span>
          </div>
        </div>
        <div className="flex h-[23px] items-end bg-white text-[#666]">
          <span className="ml-[2px] border-x border-t border-[#a8a8a8] bg-[#f4f4f4] px-[5px]">日志输出</span>
          <span className="ml-[13px] border-x border-t border-[#a8a8a8] bg-[#f4f4f4] pl-[6px] pr-[11px] font-bold">NC 执行监测</span>
        </div>
      </div>
    </div>
  );
}

const step = (747 - 460) / 43;
const passes = Array.from({ length: 44 }, (_, i) => 460 + i * step);
const densePasses = Array.from({ length: 43 }, (_, i) => 460 + step / 2 + i * step);

function Slot({ clipId }: { clipId: string }) {
  return (
    <>
      <clipPath id={clipId}>
        <rect x="660" y="528" width="36" height="152" />
        <rect x="786" y="528" width="36" height="152" />
      </clipPath>
      <path d="M595 658V460a145.500 146 0 0 1 291 0v198z" fill="#fee29a" stroke="#000" strokeWidth="1.300" />
      <circle cx="740.500" cy="460" r="84.500" fill="none" stroke="#000" strokeWidth="1.300" />
      <circle cx="740.500" cy="460" r="66" fill="#6cb0e2" stroke="#000" strokeWidth="1.200" />
      <line x1="811" y1="460" x2="1540" y2="752" stroke="#f00000" strokeWidth="1.200" />
      <g fill="none" stroke="#0000f0" strokeWidth="1" shapeRendering="crispEdges">
        {passes.map((cy) => (
          <circle key={cy} cx="741" cy={cy} r="70.500" />
        ))}
        <path d="M740.500 460v292h71" />
      </g>
      <g fill="none" stroke="#0000f0" strokeWidth="1" shapeRendering="crispEdges" clipPath={`url(#${clipId})`}>
        {densePasses.map((cy) => (
          <circle key={cy} cx="741" cy={cy} r="70.500" />
        ))}
      </g>
      <path d="M672.500 462v292M809.500 462v292" stroke="#0000f0" strokeWidth="5" shapeRendering="crispEdges" />
      <path d="M677.500 470v270M804.500 470v270" stroke="#0000f0" strokeWidth="4" strokeDasharray="2 2" shapeRendering="crispEdges" />
      <line x1="741" y1="752" x2="811" y2="460" stroke="#f000e0" strokeWidth="1.400" />
    </>
  );
}

function Viewport() {
  return (
    <div className="h-[861px] border-l-2 border-b-2 border-l-[#8c8c8c] border-b-[#dcdcdc] bg-[linear-gradient(180deg,#ffd08e_0%,#ffac76_23%,#a56f4d_68.6%,#a9d2eb_68.6%,#ffffff_100%)]">
      <svg viewBox="543 104 1137 859" className="block h-full w-full" preserveAspectRatio="none">
        <Slot clipId="moire-left" />
        <g transform="translate(800 0)">
          <Slot clipId="moire-right" />
        </g>
        <line x1="543" y1="695" x2="1680" y2="695" stroke="#000" strokeWidth="1.200" />
        <path d="M707 104L740 752M1358 104L740 752" stroke="#b4b4b4" strokeWidth="1" strokeDasharray="16 4 2 4" fill="none" />
        <g fill="#fff" stroke="#6a6a6a" strokeWidth="1">
          <path d="M600 868l3 16h-6z" />
          <path d="M598 884h4v13h-4z" />
          <path d="M600 897v11M606 906h14M606 908.500h14" />
          <path d="M620 902v9l18-4.500z" />
          <circle cx="600" cy="907" r="2" />
        </g>
        <text x="594" y="856" fontSize="15" fill="#777" fontFamily="Liberation Sans, sans-serif">
          Y
        </text>
        <text x="645" y="908" fontSize="15" fill="#777" fontFamily="Liberation Sans, sans-serif">
          X
        </text>
      </svg>
    </div>
  );
}

function StatusBar() {
  return (
    <div className="relative flex h-[21px] shrink-0 justify-end gap-[3px] pr-[2px] text-[12.5px] text-[#111] [font-family:'Open_Sans','Noto_Sans_CJK_SC',sans-serif]">
      <div className="flex w-[120px] items-center border-2 border-r-0 border-[#b4b4b4]">TP&nbsp;&nbsp;TP_MODEL</div>
      <div className="flex w-[121px] items-center border-2 border-r-0 border-[#b4b4b4] pl-[3px]">刀</div>
      <div className="flex w-[29px] items-center border-2 border-r-0 border-[#b4b4b4] pl-[1px] text-[11px] text-[#a0a0a0]">CAP</div>
      <div className="flex w-[38px] items-center border-2 border-r-0 border-[#b4b4b4] pl-[3px] text-[11px] text-[#a0a0a0]">NUM</div>
      <div className="flex w-[35px] items-center border-2 border-r-0 border-[#b4b4b4] pl-[2px] text-[12px] text-[#a0a0a0]">SCRL</div>
      <span className="absolute left-[1459px] top-[1px] text-[17px] font-bold leading-[20px] tracking-[.8px] text-[#e8302c] [-webkit-text-stroke:0.4px_#fff] [font-family:'Liberation_Sans','Noto_Sans_CJK_SC',sans-serif] [text-shadow:0_0_2px_#fff,0_0_2px_#fff]">
        三维网www.3dportal.cn
      </span>
    </div>
  );
}

function Taskbar() {
  return (
    <div className="flex h-[5px] shrink-0 border-t border-[#1c2430] bg-[#587898]">
      <div className="ml-[12px] h-[4px] w-[28px] rounded-t-full border-t border-x border-[#dff] bg-[#3c78b0]" />
      <div className="ml-[20px] h-[4px] w-[159px] border-x border-[#26384c] bg-[#c8d8e8]" />
      <div className="h-[4px] w-[159px] border-r border-[#26384c] bg-[#c8d8e8]" />
      <div className="ml-[3px] h-[4px] w-[158px] border-x border-[#26384c] bg-[#c8d8e8]" />
    </div>
  );
}

export default function App() {
  return (
    <div className="flex h-[1015px] w-[1680px] flex-col overflow-hidden bg-[#f0f0f0] text-[12px] [font-family:'Liberation_Sans','Noto_Sans_CJK_SC',sans-serif]">
      <TitleBar />
      <MenuBar />
      <ToolRowOne />
      <ToolRowTwo />
      <div className="flex h-[885px] shrink-0">
        <Sidebar />
        <LeftPanel />
        <div className="flex-1 bg-white">
          <Viewport />
        </div>
      </div>
      <StatusBar />
      <Taskbar />
    </div>
  );
}
